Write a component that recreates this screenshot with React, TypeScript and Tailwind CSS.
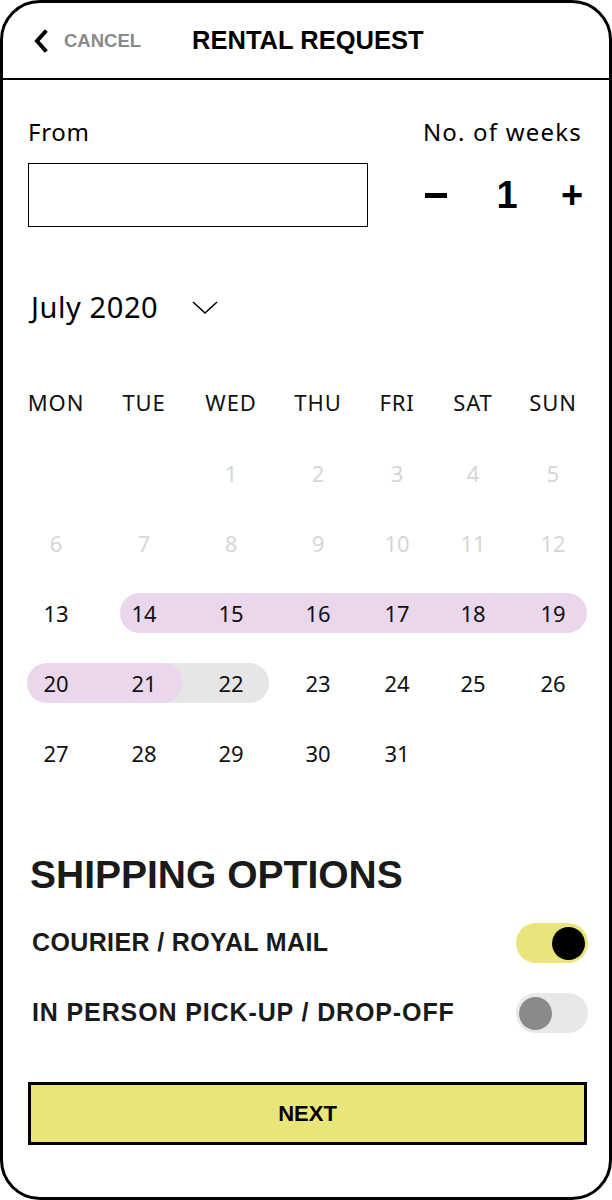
import React from "react";

const sans = "font-['Noto_Sans',sans-serif]";
const bold = "font-['Liberation_Sans',Arial,sans-serif] font-bold";

const colStart = [
  "col-start-1",
  "col-start-2",
  "col-start-3",
  "col-start-4",
  "col-start-5",
  "col-start-6",
  "col-start-7",
];

const days = ["MON", "TUE", "WED", "THU", "FRI", "SAT", "SUN"];

// null = empty cell, muted = previous days that can't be picked
const weeks: { n: number | null; muted?: boolean }[][] = [
  [{ n: null }, { n: null }, { n: 1, muted: true }, { n: 2, muted: true }, { n: 3, muted: true }, { n: 4, muted: true }, { n: 5, muted: true }],
  [6, 7, 8, 9, 10, 11, 12].map((n) => ({ n, muted: true })),
  [13, 14, 15, 16, 17, 18, 19].map((n) => ({ n })),
  [20, 21, 22, 23, 24, 25, 26].map((n) => ({ n })),
  [{ n: 27 }, { n: 28 }, { n: 29 }, { n: 30 }, { n: 31 }, { n: null }, { n: null }],
];

const gridCols = "grid grid-cols-[90px_86px_88px_86px_72px_80px_80px]";

function Toggle({ on }: { on: boolean }) {
  return (
    <div
      className={`w-[72px] h-[40px] rounded-full flex items-center px-[3px] ${
        on ? "bg-[#e8e57a] justify-end" : "bg-[#e8e8e8] justify-start"
      }`}
    >
      <div className={`w-[33px] h-[33px] rounded-full ${on ? "bg-black" : "bg-[#8a8a8a]"}`} />
    </div>
  );
}

function Week({ cells, index }: { cells: { n: number | null; muted?: boolean }[]; index: number }) {
  return (
    <div className={`${gridCols} grid-rows-[40px]`}>
      {index === 2 && (
        <div className="row-start-1 col-start-2 col-span-6 ml-[19px] mr-[6px] rounded-full bg-[#ebd7ec]" />
      )}
      {index === 3 && (
        <>
          <div className="row-start-1 col-start-2 col-span-2 ml-[49px] mr-[6px] rounded-full bg-[#e6e6e6]" />
          <div className="row-start-1 col-start-1 col-span-2 ml-[16px] mr-[4px] rounded-full bg-[#ebd7ec]" />
        </>
      )}
      {cells.map((c, i) => (
        <div
          key={i}
          className={`row-start-1 ${colStart[i]} flex items-center justify-center text-[22px] ${
            c.muted ? "text-[#d6d6d6]" : "text-[#111]"
          }`}
        >
          {c.n}
        </div>
      ))}
    </div>
  );
}

export default function App() {
  return (
    <div className={`w-[612px] h-[1200px] bg-white ${sans}`}>
      <div className="h-full border-[3px] border-black rounded-[40px] overflow-hidden flex flex-col">
        <div className="h-[77px] border-b-2 border-black flex items-center pl-[30px] shrink-0">
          <svg width="18" height="24" viewBox="0 0 18 24" className="mr-[13px]">
            <polyline points="12,3 4,12 12,21" fill="none" stroke="black" strokeWidth="4" strokeLinecap="square" />
          </svg>
          <span className={`${bold} text-[18.5px] text-[#8a8a8a]`}>CANCEL</span>
          <span className={`${bold} text-[25.5px] text-black ml-[51px]`}>RENTAL REQUEST</span>
        </div>

        <div className="flex justify-between items-end pl-[25px] pr-[27px] mt-[38px]">
          <span className="text-[24px] leading-[28px] tracking-[0.03em]">From</span>
          <span className="text-[24px] leading-[28px] tracking-[0.05em]">No. of weeks</span>
        </div>

        <div className="flex items-center pl-[25px] pr-[25px] mt-[17px]">
          <div className="w-[340px] h-[64px] border-[1.5px] border-black" />
          <div className={`${bold} flex-1 flex items-center justify-end text-[38px] leading-none`}>
            <span className="w-[22px] flex justify-center">
              <span className="block w-[22px] h-[5px] bg-black" />
            </span>
            <span className="ml-[49px] w-[22px] text-center">1</span>
            <span className="ml-[42px] w-[24px] text-center">+</span>
          </div>
        </div>

        <div className="flex items-center pl-[28px] mt-[64px]">
          <span className="text-[29px] leading-[32px] tracking-[0.02em]">July 2020</span>
          <svg width="26" height="14" viewBox="0 0 26 14" className="ml-[34px] mt-[2px]">
            <polyline points="1,1 13,12 25,1" fill="none" stroke="black" strokeWidth="1.6" />
          </svg>
        </div>

        <div className="pl-[8px] mt-[63px]">
          <div className={`${gridCols} h-[28px]`}>
            {days.map((d) => (
              <div key={d} className="flex items-center justify-center text-[22px] tracking-[0.04em] text-[#111]">
                {d}
              </div>
            ))}
          </div>
          <div className="flex flex-col gap-[30px] mt-[39px]">
            {weeks.map((w, i) => (
              <Week key={i} cells={w} index={i} />
            ))}
          </div>
        </div>

        <div className={`${bold} pl-[27px] mt-[80px] text-[39px] leading-[44px] text-[#1a1a1a]`}>
          SHIPPING OPTIONS
        </div>

        <div className="flex flex-col gap-[30px] mt-[26px] pl-[29px] pr-[21px]">
          <div className="flex items-center justify-between">
            <span className={`${bold} text-[25px] tracking-[0.015em] text-[#1a1a1a]`}>COURIER / ROYAL MAIL</span>
            <Toggle on />
          </div>
          <div className="flex items-center justify-between">
            <span className={`${bold} text-[25px] tracking-[0.035em] text-[#1a1a1a]`}>IN PERSON PICK-UP / DROP-OFF</span>
            <Toggle on={false} />
          </div>
        </div>

        <button
          className={`${bold} ml-[25px] mr-[22px] mt-[49px] h-[63px] border-[3px] border-black bg-[#e9e679] text-[22px] text-black flex items-center justify-center`}
        >
          NEXT
        </button>
      </div>
    </div>
  );
}
